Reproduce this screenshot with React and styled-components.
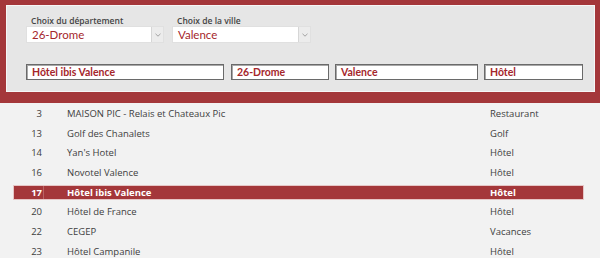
import React from "react";
import styled, { createGlobalStyle } from "styled-components";

const Global = createGlobalStyle`
  html, body { margin: 0; padding: 0; background: #f2f2f2; }
  body { font-family: "Open Sans", "Noto Sans", sans-serif; }
  * { box-sizing: border-box; }
`;

const Page = styled.div`
  width: 600px;
  height: 258px;
  overflow: hidden;
  background: #f2f2f2;
`;

const Header = styled.div`
  background: #a4373a;
  padding: 5px 5px 11px 6px;
`;

const Panel = styled.div`
  background: #e6e6e6;
  border: 1px solid #f6f6f6;
  height: 87px;
  padding: 10px 0 0 19px;
  display: flex;
  flex-direction: column;
`;

const ComboRow = styled.div`
  display: flex;
  gap: 8px;
`;

const Field = styled.div`
  display: flex;
  flex-direction: column;
  width: ${(p) => p.$w}px;
`;

const Label = styled.div`
  font-family: "Open Sans", sans-serif;
  font-size: 8.5px;
  line-height: 10px;
  color: #444;
  padding-left: 5px;
  font-weight: 600;
`;

const Combo = styled.div`
  height: 17px;
  background: #fff;
  border: 1px solid #e0e0e0;
  display: flex;
  align-items: center;
`;

const ComboText = styled.div`
  flex: 1;
  font-family: Lato, sans-serif;
  font-size: 11.5px;
  color: #a5262b;
  padding-left: 5px;
  line-height: 15px;
`;

const ComboBtn = styled.div`
  width: 12px;
  height: 100%;
  background: #ececec;
  border-left: 1px solid #d6d6d6;
  display: flex;
  align-items: center;
  justify-content: center;
`;

const BoxRow = styled.div`
  display: flex;
  margin-top: 21px;
`;

const Box = styled.div`
  width: ${(p) => p.$w}px;
  margin-left: ${(p) => p.$ml || 0}px;
  height: 16px;
  background: #fff;
  border: 1px solid #6a6a6a;
  box-shadow: inset 1px 1px 0 #a8a8a8;
  font-family: Lato, sans-serif;
  font-size: 10.5px;
  font-weight: 700;
  color: #a5262b;
  line-height: 14px;
  padding-left: 5px;
  white-space: nowrap;
  overflow: hidden;
`;

const List = styled.div`
  padding: 4px 17px 0 14px;
  display: flex;
  flex-direction: column;
  gap: 6.7px;
`;

const Row = styled.div`
  height: 13px;
  display: grid;
  grid-template-columns: 30px 446px 1fr;
  align-items: center;
  font-size: 9.5px;
  background: ${(p) => (p.$sel ? "#a4373a" : "transparent")};
  color: ${(p) => (p.$sel ? "#fff" : "#404040")};
  font-weight: ${(p) => (p.$sel ? 700 : 400)};
  box-shadow: ${(p) => (p.$sel ? "0 0 0 1px #e6c6c6" : "none")};
`;

const Num = styled.div`
  text-align: right;
  padding-right: 1px;
  height: 100%;
  line-height: 13px;
  border-right: 1px solid ${(p) => (p.$sel ? "#b86365" : "transparent")};
`;

const Name = styled.div`
  padding-left: 23px;
  line-height: 13px;
  white-space: nowrap;
`;

const Type = styled.div`
  line-height: 13px;
`;

const Chevron = () => (
  <svg width="6" height="4" viewBox="0 0 6 4">
    <path d="M0.5 0.8 L3 3.2 L5.5 0.8" fill="none" stroke="#9a9a9a" strokeWidth="0.9" />
  </svg>
);

const rows = [
  [3, "MAISON PIC - Relais et Chateaux Pic", "Restaurant"],
  [13, "Golf des Chanalets", "Golf"],
  [14, "Yan's Hotel", "Hôtel"],
  [16, "Novotel Valence", "Hôtel"],
  [17, "Hôtel ibis Valence", "Hôtel", true],
  [20, "Hôtel de France", "Hôtel"],
  [22, "CEGEP", "Vacances"],
  [23, "Hôtel Campanile", "Hôtel"],
];

export default function App() {
  return (
    <Page>
      <Global />
      <Header>
        <Panel>
          <ComboRow>
            <Field $w={138}>
              <Label>Choix du département</Label>
              <Combo>
                <ComboText>26-Drome</ComboText>
                <ComboBtn><Chevron /></ComboBtn>
              </Combo>
            </Field>
            <Field $w={139}>
              <Label>Choix de la ville</Label>
              <Combo>
                <ComboText>Valence</ComboText>
                <ComboBtn><Chevron /></ComboBtn>
              </Combo>
            </Field>
          </ComboRow>
          <BoxRow>
            <Box $w={198}>Hôtel ibis Valence</Box>
            <Box $w={98} $ml={7}>26-Drome</Box>
            <Box $w={143} $ml={6}>Valence</Box>
            <Box $w={99} $ml={6}>Hôtel</Box>
          </BoxRow>
        </Panel>
      </Header>
      <List>
        {rows.map(([n, name, type, sel]) => (
          <Row key={n} $sel={sel}>
            <Num $sel={sel}>{n}</Num>
            <Name>{name}</Name>
            <Type>{type}</Type>
          </Row>
        ))}
      </List>
    </Page>
  );
}
